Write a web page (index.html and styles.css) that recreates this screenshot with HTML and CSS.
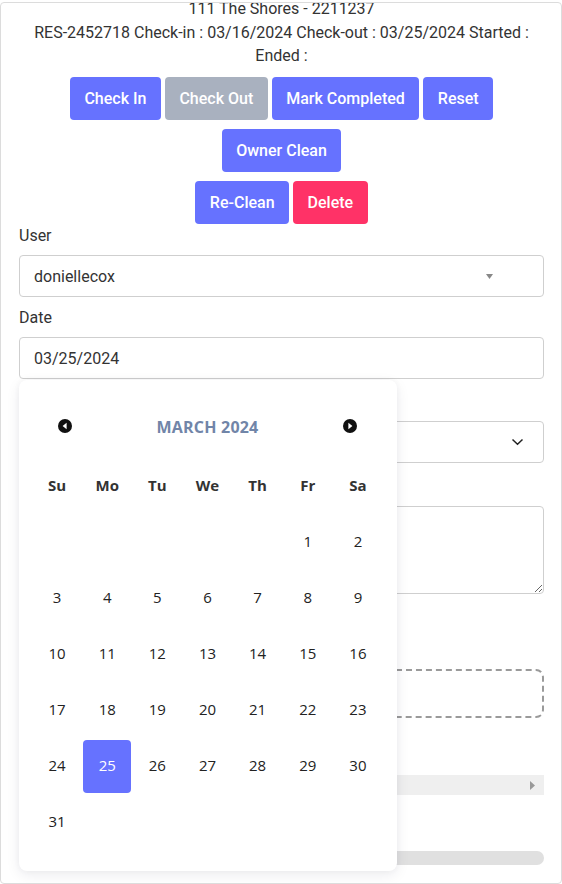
FILE: index.html
```html
<!DOCTYPE html>
<html>
<head>
<meta charset="utf-8">
<link rel="stylesheet" href="styles.css">
</head>
<body>
<div class="frame">
  <div class="content">
    <div class="info">
      <div>111 The Shores - 2211237</div>
      <div>RES-2452718 Check-in : 03/16/2024 Check-out : 03/25/2024 Started : Ended :</div>
    </div>
    <div class="btn-row first">
      <button class="btn">Check In</button>
      <button class="btn gray">Check Out</button>
      <button class="btn">Mark Completed</button>
      <button class="btn">Reset</button>
    </div>
    <div class="btn-row">
      <button class="btn">Owner Clean</button>
    </div>
    <div class="btn-row">
      <button class="btn">Re-Clean</button>
      <button class="btn pink">Delete</button>
    </div>

    <label class="lbl">User</label>
    <div class="select-box">
      <span>doniellecox</span>
      <svg class="tri" width="7" height="5" viewBox="0 0 7 5"><polygon points="0,0 7,0 3.5,5" fill="#888"/></svg>
    </div>

    <label class="lbl">Date</label>
    <div class="date-wrap">
      <div class="input-box">03/25/2024</div>
      <div class="calendar">
        <div class="cal-head">
          <svg width="14" height="14" viewBox="0 0 14 14"><circle cx="7" cy="7" r="7" fill="#111"/><polygon points="8.6,3.8 8.6,10.2 4.6,7" fill="#fff"/></svg>
          <span class="month">MARCH 2024</span>
          <svg width="14" height="14" viewBox="0 0 14 14"><circle cx="7" cy="7" r="7" fill="#111"/><polygon points="5.4,3.8 5.4,10.2 9.4,7" fill="#fff"/></svg>
        </div>
        <div class="cal-grid">
          <span class="wd">Su</span><span class="wd">Mo</span><span class="wd">Tu</span><span class="wd">We</span><span class="wd">Th</span><span class="wd">Fr</span><span class="wd">Sa</span>
          <span></span><span></span><span></span><span></span><span></span><span>1</span><span>2</span>
          <span>3</span><span>4</span><span>5</span><span>6</span><span>7</span><span>8</span><span>9</span>
          <span>10</span><span>11</span><span>12</span><span>13</span><span>14</span><span>15</span><span>16</span>
          <span>17</span><span>18</span><span>19</span><span>20</span><span>21</span><span>22</span><span>23</span>
          <span>24</span><span class="sel">25</span><span>26</span><span>27</span><span>28</span><span>29</span><span>30</span>
          <span>31</span>
        </div>
      </div>
    </div>

    <div class="select-box chev-box">
      <svg width="13" height="8" viewBox="0 0 13 8"><polyline points="1.5,1.5 6.5,6.3 11.5,1.5" fill="none" stroke="#222" stroke-width="1.5"/></svg>
    </div>

    <textarea class="notes"></textarea>

    <div class="dropzone"></div>

    <div class="hbar">
      <svg width="5" height="9" viewBox="0 0 5 9"><polygon points="0,0 5,4.5 0,9" fill="#999"/></svg>
    </div>

    <div class="progress"></div>
  </div>
</div>
</body>
</html>
```

FILE: styles.css
```css
html, body {
  margin: 0;
  padding: 0;
  background: #fff;
}

body {
  font-family: Roboto, "Liberation Sans", sans-serif;
  font-size: 16px;
  color: #333;
}

.frame {
  margin-top: 2px;
  height: 882px;
  box-sizing: border-box;
  border: 1px solid #dcdcdc;
  border-radius: 4px;
  overflow: hidden;
}

.content {
  margin-top: -6px;
  padding: 0 17px 0 18px;
}

.info {
  text-align: center;
  line-height: 23.5px;
  color: #333;
}

.btn-row {
  display: flex;
  justify-content: center;
  gap: 4px;
  margin-top: 9px;
}

.btn-row.first {
  margin-top: 9.5px;
}

.btn {
  font-family: Roboto, "Liberation Sans", sans-serif;
  font-size: 16px;
  font-weight: 500;
  line-height: 23px;
  color: #fff;
  background: #6672ff;
  border: none;
  border-radius: 4px;
  padding: 10px 14.5px;
  height: 43px;
}

.btn.gray {
  background: #a9b1bf;
}

.btn.pink {
  background: #ff3267;
}

.lbl {
  display: block;
  line-height: 23px;
  margin-bottom: 8px;
}

.select-box {
  height: 42px;
  box-sizing: border-box;
  border: 1px solid #cfcfcf;
  border-radius: 4px;
  display: flex;
  align-items: center;
  justify-content: space-between;
  padding: 0 50px 0 14px;
  margin-bottom: 9px;
  color: #333;
}

.select-box .tri {
  margin-top: 1px;
}

.date-wrap {
  position: relative;
}

.input-box {
  height: 42px;
  box-sizing: border-box;
  border: 1px solid #cfcfcf;
  border-radius: 4px;
  display: flex;
  align-items: center;
  padding: 0 14px;
}

.chev-box {
  margin-top: 42px;
  margin-bottom: 0;
  justify-content: flex-end;
  padding: 0 19px 0 0;
}

.notes {
  display: block;
  width: 100%;
  box-sizing: border-box;
  height: 88px;
  margin: 43px 0 0;
  border: 1px solid #cfcfcf;
  border-radius: 4px;
  resize: vertical;
  font-family: inherit;
}

.dropzone {
  margin-top: 75px;
  height: 49px;
  box-sizing: border-box;
  border: 2px dashed #9a9a9a;
  border-radius: 8px;
}

.hbar {
  margin-top: 57px;
  height: 20px;
  background: #efefef;
  display: flex;
  align-items: center;
  justify-content: flex-end;
  padding-right: 9px;
}

.progress {
  margin-top: 56px;
  height: 14px;
  background: #e0e0e0;
  border-radius: 7px;
}

/* Calendar popup */
.calendar {
  position: absolute;
  top: calc(100% + 1px);
  left: 0;
  width: 378px;
  box-sizing: border-box;
  background: #fff;
  border-radius: 8px;
  box-shadow: 0 4px 14px rgba(20, 30, 60, 0.08), 0 0 6px rgba(20, 30, 60, 0.04);
  padding: 33px 14px 22px 13px;
  font-family: "Open Sans", "DejaVu Sans", sans-serif;
  z-index: 5;
}

.cal-head {
  height: 28px;
  display: flex;
  align-items: center;
  justify-content: space-between;
  padding: 0 26px;
  margin-bottom: 19px;
}

.cal-head svg {
  margin-top: -2px;
}

.month {
  font-size: 16px;
  font-weight: 700;
  color: #7185a8;
  letter-spacing: 0.2px;
}

.cal-grid {
  display: grid;
  grid-template-columns: repeat(7, 1fr);
  grid-auto-rows: 53px;
  row-gap: 3px;
}

.cal-grid span {
  display: flex;
  align-items: center;
  justify-content: center;
  font-size: 15px;
  line-height: 1;
  padding-bottom: 2px;
  box-sizing: border-box;
  color: #222;
  border-radius: 4px;
}

.cal-grid .wd {
  font-weight: 700;
  color: #333;
}

.cal-grid .sel {
  background: #6672ff;
  color: #fff;
  margin: 0 1px;
}
```
